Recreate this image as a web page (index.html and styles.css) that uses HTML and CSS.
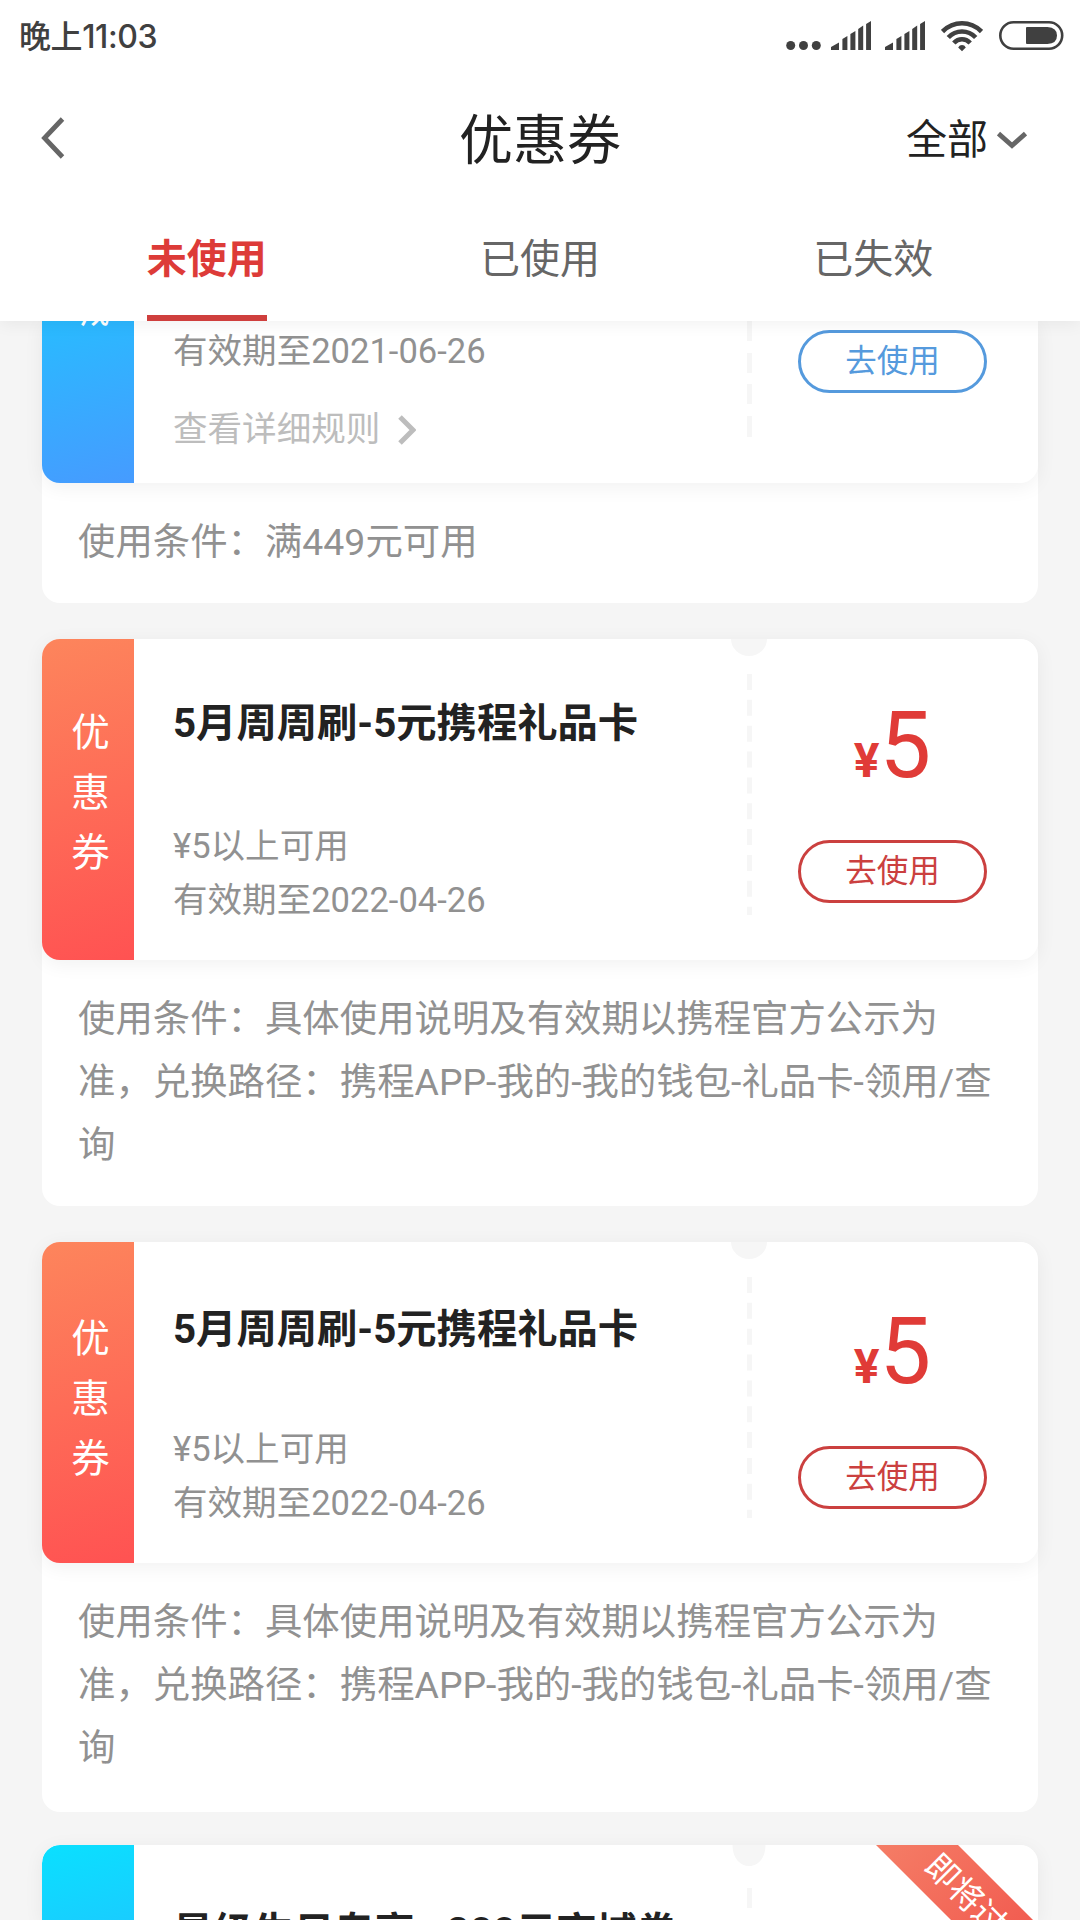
FILE: index.html
```html
<!DOCTYPE html>
<html lang="zh-CN">
<head>
<meta charset="utf-8">
<title>优惠券</title>
<link rel="stylesheet" href="styles.css">
</head>
<body>
<header class="header">
  <div class="status">
    <span class="status-time">晚上11:03</span>
    <div class="status-icons">
      <svg class="icon-dots" width="35" height="32" viewBox="0 0 35 32"><circle cx="4.7" cy="25.5" r="4.5"/><circle cx="17.5" cy="25.5" r="4.5"/><circle cx="30.3" cy="25.5" r="4.5"/></svg>
      <svg class="icon-signal" width="40" height="32" viewBox="0 0 40 32"><path d="M0 30V27L8 22.500V30zM11.400 30V19L16.400 16V30zM19.400 30V14L24.400 11V30zM27.200 30V9L32.200 5.500V30zM35.100 30V4L40 1V30z"/></svg>
      <svg class="icon-signal" width="40" height="32" viewBox="0 0 40 32"><path d="M0 30V27L8 22.500V30zM11.400 30V19L16.400 16V30zM19.400 30V14L24.400 11V30zM27.200 30V9L32.200 5.500V30zM35.100 30V4L40 1V30z"/></svg>
      <svg class="icon-wifi" width="42" height="32" viewBox="0 0 42 32"><g fill="none" stroke="#404040" stroke-width="4.600"><path d="M1.500 11.500C12.500 .5 29.500 .5 40.500 11.500M7.300 17.500C15 9.500 27 9.500 34.700 17.500M12.800 23C17.500 18 24.500 18 29.200 23"/></g><path d="M21 31.200L17.200 27.400Q18.500 25 21 25T24.800 27.400z"/></svg>
      <svg class="icon-battery" width="65" height="32" viewBox="0 0 65 32"><rect x="1.300" y="2.300" width="61.900" height="26.400" rx="13.200" fill="none" stroke="#404040" stroke-width="2.600"/><path d="M28 7H48.500Q58 7.500 58 15.500T48.500 24H28Q27 24 27 23V8Q27 7 28 7z"/></svg>
    </div>
  </div>
  <nav class="nav">
    <svg class="nav-back" width="24" height="42" viewBox="0 0 24 42"><path d="M21.500 2L3.500 21L21.500 40"/></svg>
    <h1 class="nav-title">优惠券</h1>
    <div class="nav-filter">
      <span>全部</span>
      <svg width="30" height="18" viewBox="0 0 30 18"><path d="M1.500 2.500L15 14.500L28.500 2.500"/></svg>
    </div>
  </nav>
  <div class="tabs">
    <div class="tab-cell"><span class="tab tab-active">未使用</span></div>
    <div class="tab-cell"><span class="tab">已使用</span></div>
    <div class="tab-cell"><span class="tab">已失效</span></div>
  </div>
</header>

<main class="list">
  <article class="coupon coupon-first">
    <section class="ticket ticket-blue">
      <div class="stub"><span>城</span></div>
      <div class="info">
        <p class="meta">有效期至2021-06-26</p>
        <p class="rules">查看详细规则<svg width="18" height="30" viewBox="0 0 18 30"><path d="M2 2L15 15L2 28"/></svg></p>
      </div>
      <svg class="divider" width="5" height="162" viewBox="0 0 5 162"><path d="M0 0h5v20H0zM0 32h5v20H0zM0 63h5v20H0zM0 95h5v21H0z"/></svg>
      <div class="side"><button class="use">去使用</button></div>
    </section>
    <p class="terms">使用条件：满449元可用</p>
  </article>

  <article class="coupon">
    <section class="ticket">
      <div class="stub"><span>优</span><span>惠</span><span>券</span></div>
      <div class="info">
        <h2 class="name">5月周周刷-5元携程礼品卡</h2>
        <p class="meta">¥5以上可用</p>
        <p class="meta">有效期至2022-04-26</p>
      </div>
      <svg class="divider" width="36" height="321" viewBox="0 0 36 321"><path d="M0 0A18 17 0 0 0 36 0z"/><path class="dashes" d="M18.500 35V276"/></svg>
      <div class="side">
        <div class="price"><span class="yen">¥</span>5</div>
        <button class="use">去使用</button>
      </div>
    </section>
    <p class="terms">使用条件：具体使用说明及有效期以携程官方公示为准，兑换路径：携程APP-我的-我的钱包-礼品卡-领用/查询</p>
  </article>

  <article class="coupon coupon-low">
    <section class="ticket">
      <div class="stub"><span>优</span><span>惠</span><span>券</span></div>
      <div class="info">
        <h2 class="name">5月周周刷-5元携程礼品卡</h2>
        <p class="meta">¥5以上可用</p>
        <p class="meta">有效期至2022-04-26</p>
      </div>
      <svg class="divider" width="36" height="321" viewBox="0 0 36 321"><path d="M0 0A18 17 0 0 0 36 0z"/><path class="dashes" d="M18.500 35V276"/></svg>
      <div class="side">
        <div class="price"><span class="yen">¥</span>5</div>
        <button class="use">去使用</button>
      </div>
    </section>
    <p class="terms">使用条件：具体使用说明及有效期以携程官方公示为准，兑换路径：携程APP-我的-我的钱包-礼品卡-领用/查询</p>
  </article>

  <article class="coupon coupon-low">
    <section class="ticket ticket-cyan">
      <div class="stub"></div>
      <div class="info">
        <h2 class="name">星级生日专享--200元商城券</h2>
      </div>
      <svg class="divider" width="36" height="75" viewBox="0 0 36 75"><path d="M1.500 0C1.500 28 34.500 28 34.500 0z"/><path d="M16 43h5v20h-5z"/></svg>
      <div class="side"></div>
      <div class="ribbon">即将过期</div>
    </section>
  </article>
</main>
</body>
</html>
```
FILE: styles.css
```css
* { box-sizing: border-box; margin: 0; padding: 0; }

body {
  width: 1080px;
  height: 1920px;
  overflow: hidden;
  display: flex;
  flex-direction: column;
  background: #f5f5f5;
  color: #222;
  font-family: Roboto, "Noto Sans CJK SC", sans-serif;
}

.header {
  position: relative;
  z-index: 2;
  flex: none;
  height: 321px;
  background: #fff;
  box-shadow: 0 3px 16px rgba(0, 0, 0, .06);
}

/* Status bar */
.status {
  display: flex;
  justify-content: space-between;
  height: 74px;
  padding: 0 16px 0 19px;
}
.status-time {
  font: 500 32px/74px Inter, "Noto Sans CJK SC", sans-serif;
  letter-spacing: -.4px;
  color: #404040;
}
.status-icons {
  display: flex;
  padding-top: 20px;
  fill: #404040;
}
.icon-dots { margin-right: 10px; }
.icon-signal { margin-right: 14px; }
.icon-wifi { margin: 0 16px 0 2px; }

/* Title row */
.nav {
  display: grid;
  grid-template-columns: 1fr auto 1fr;
  align-items: center;
  height: 128px;
  padding: 0 53px 0 41px;
}
.nav svg {
  fill: none;
  stroke: #666;
  stroke-width: 4.8;
}
.nav-title {
  margin: -4px 0 0 12px;
  font-size: 54px;
  font-weight: 400;
}
.nav-filter {
  display: flex;
  align-items: center;
  justify-content: flex-end;
  gap: 9px;
  font-size: 41px;
}
.nav-filter span { margin: -4px 0 0; }
.nav-filter svg { margin-top: 3px; }

/* Tabs */
.tabs {
  display: flex;
  padding: 0 40px;
}
.tab-cell {
  flex: 1;
  display: flex;
  justify-content: center;
}
.tab {
  height: 119px;
  font-size: 40px;
  line-height: 115px;
  color: #666;
}
.tab-active {
  color: #dd3b38;
  font-weight: 700;
  border-bottom: 6px solid #cf3f3d;
}

/* Coupons */
.list {
  flex: 1;
  min-height: 0;
  display: flex;
  flex-direction: column;
  gap: 36px;
  padding: 0 42px;
}
.coupon {
  flex: none;
  background: #fff;
  border-radius: 18px;
}
.coupon-first { border-radius: 0 0 18px 18px; }
.coupon:last-child {
  margin-top: -3px;
  border-radius: 18px 18px 0 0;
}
.ticket {
  position: relative;
  display: flex;
  height: 321px;
  border-radius: 18px;
  background: #fff;
  box-shadow: 0 4px 20px rgba(0, 0, 0, .06);
}
.stub {
  width: 92px;
  display: flex;
  flex-direction: column;
  align-items: center;
  padding: 64px 0 0 5px;
  border-radius: 18px 0 0 18px;
  background: linear-gradient(165deg, #fd855c, #ff5252);
  color: #fff;
  font-size: 38.5px;
  line-height: 60px;
}
.coupon-low .stub { padding-top: 67px; }
.info {
  width: 603px;
  padding: 55px 0 0 39px;
}
.name {
  height: 125px;
  font-size: 40.3px;
  line-height: 60px;
  white-space: nowrap;
}
.coupon-low .info { padding-top: 58px; }
.coupon-low .name { height: 122px; }
.meta {
  font-size: 34.56px;
  line-height: 54px;
  color: #919191;
}
.divider {
  flex: none;
  width: 36px;
  margin-left: -6px;
  fill: #f6f6f6;
}
.dashes {
  stroke: #f6f6f6;
  stroke-width: 5;
  stroke-dasharray: 16 9.850;
}
.side {
  width: 189px;
  margin-left: 31px;
  display: flex;
  flex-direction: column;
  align-items: center;
}
.price {
  height: 201px;
  padding-top: 61px;
  color: #e03b37;
  font-size: 92px;
  line-height: 92px;
}
.coupon-low .price { height: 204px; padding-top: 64px; }
.yen {
  margin-right: 0;
  font-size: 48px;
  font-weight: 700;
}
.use {
  width: 189px;
  height: 63px;
  border: 3px solid #cb403f;
  border-radius: 32px;
  background: #fff;
  color: #cb403f;
  font: 31.5px/54px Roboto, "Noto Sans CJK SC", sans-serif;
}
.terms {
  height: 246px;
  padding: 28px 34px 0 36px;
  font-size: 37.4px;
  line-height: 63px;
  color: #919191;
}
.coupon-low .terms { height: 249px; }

/* Blue coupon, partly scrolled beneath the header */
.ticket-blue {
  height: 162px;
  border-radius: 0 0 18px 18px;
}
.ticket-blue .stub {
  padding-top: 0;
  border-radius: 0 0 0 18px;
  background: linear-gradient(165deg, #29bbff, #469bff);
}
.ticket-blue .stub span { margin-top: -42px; }
.ticket-blue .info { padding-top: 3px; }
.ticket-blue .divider { width: 5px; margin: 0 15px 0 10px; }
.ticket-blue .use {
  margin-top: 9px;
  border-color: #559add;
  color: #559add;
}
.rules {
  display: flex;
  align-items: center;
  gap: 18px;
  margin-top: 24px;
  font-size: 34.56px;
  line-height: 54px;
  color: #bdbdbd;
}
.rules svg {
  margin-top: 2px;
  fill: none;
  stroke: #bdbdbd;
  stroke-width: 5;
}
.ticket-blue + .terms { height: 120px; }

/* Cyan coupon with expiry ribbon, cut by the bottom of the screen */
.ticket-cyan {
  height: 75px;
  border-radius: 18px 18px 0 0;
  overflow: hidden;
}
.ticket-cyan .stub {
  border-radius: 18px 0 0 0;
  background: linear-gradient(165deg, #0ae0ff, #19cdff);
}
.ribbon {
  position: absolute;
  top: 32px;
  right: -70px;
  width: 260px;
  height: 58px;
  transform: rotate(45deg);
  background: linear-gradient(90deg, #f58068, #f04c46);
  color: #fff;
  font-size: 33px;
  line-height: 60px;
  text-align: center;
}
```
